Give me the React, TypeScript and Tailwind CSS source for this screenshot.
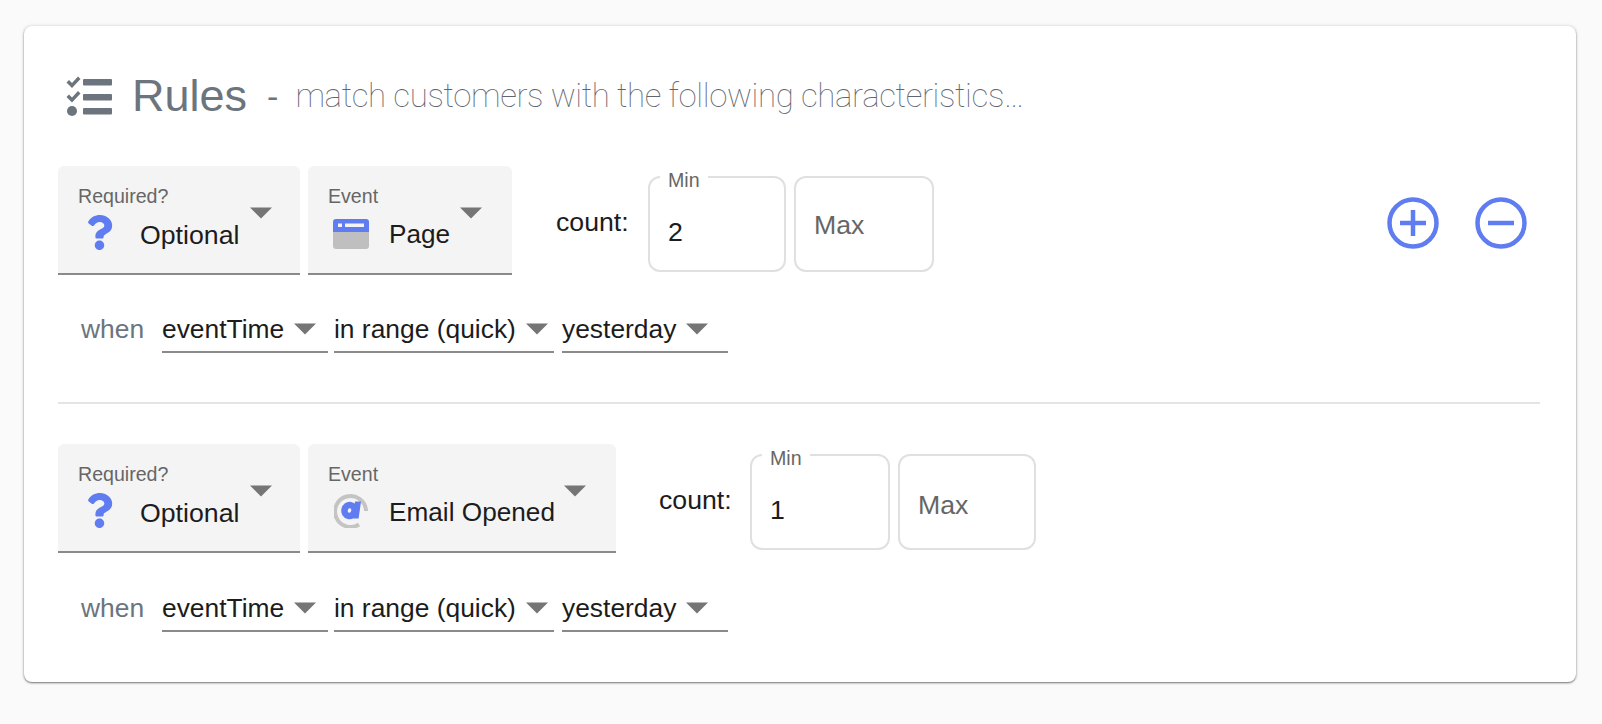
import React from "react";
import { FaQuestion } from "react-icons/fa";

const BLUE = "#5f7cf0";

// Small triangle used by every select
function Caret({ className = "" }: { className?: string }) {
  return (
    <svg width="22" height="12" viewBox="0 0 22 12" className={className}>
      <path d="M0 0.5h22L11 11.5z" fill="#757575" />
    </svg>
  );
}

function ChecklistIcon() {
  return (
    <svg width="46" height="40" viewBox="0 0 46 40" fill="#6c757d">
      <path d="M0.5 6.5l2.5-2.5 3 3L12 0.5l2.5 2.5-8.5 9z" />
      <path d="M0.5 21l2.5-2.5 3 3 6-6.5 2.5 2.5-8.5 9z" />
      <circle cx="6" cy="35" r="5" />
      <rect x="17" y="3" width="29" height="6.5" rx="1" />
      <rect x="17" y="18" width="29" height="6.5" rx="1" />
      <rect x="17" y="32" width="29" height="6.5" rx="1" />
    </svg>
  );
}

function PageIcon() {
  return (
    <svg width="36" height="30" viewBox="0 0 36 30" className="ml-[4px] mt-[3px]">
      <path d="M0 12h36v15a3 3 0 0 1-3 3H3a3 3 0 0 1-3-3z" fill="#bfbfbf" />
      <path
        d="M3 0h30a3 3 0 0 1 3 3v10H0V3a3 3 0 0 1 3-3zM5 4.5v3.5h4V4.5zM12 4.5v3.5h19V4.5z"
        fill={BLUE}
        fillRule="evenodd"
      />
    </svg>
  );
}

function AtIcon() {
  return (
    <svg width="34" height="36" viewBox="0 0 34 36" className="ml-[3px]">
      <path
        d="M25 32.5A15.5 15.5 0 1 1 32 18v1"
        fill="none"
        stroke="#c4c4c4"
        strokeWidth="4"
      />
      <ellipse cx="15.5" cy="18.5" rx="5" ry="5.5" fill="none" stroke={BLUE} strokeWidth="6.5" transform="rotate(12 15.5 18.5)" />
      <path d="M21 9.5h6l-2.4 17h-6z" fill={BLUE} />
    </svg>
  );
}

function CircleButton({ plus }: { plus?: boolean }) {
  return (
    <svg width="52" height="52" viewBox="0 0 52 52" fill="none" stroke={BLUE} strokeWidth="4.5">
      <circle cx="26" cy="26" r="23.5" />
      <path d="M13 26h26" />
      {plus && <path d="M26 13v26" />}
    </svg>
  );
}

function FilledSelect({
  label,
  value,
  icon,
  width,
  caretGap,
  valueClass,
}: {
  label: string;
  value: string;
  icon: React.ReactNode;
  width: string;
  caretGap: string;
  valueClass: string;
}) {
  return (
    <div className={`${width} h-[109px] bg-[#f4f4f4] rounded-t-[6px] border-b-2 border-[#8a8a8a] pl-[20px] pt-[18px] flex justify-between`}>
      <div>
        <div className="text-[19.6px] leading-[24px] text-[#666]">{label}</div>
        <div className="flex items-center mt-[4px] h-[40px]">
          <div className="w-[62px] flex justify-center pr-[20px]">{icon}</div>
          <span className={`pt-[6px] text-[#1c1c1c] ${valueClass}`}>{value}</span>
        </div>
      </div>
      <Caret className={`mt-[23px] ${caretGap}`} />
    </div>
  );
}

function InlineSelect({ value, width }: { value: string; width: string }) {
  return (
    <div className={`${width} h-[46px] border-b-2 border-[#8a8a8a] flex items-start gap-[10px]`}>
      <span className="pt-[2px] text-[26.4px] leading-[40px] text-[#1c1c1c] whitespace-nowrap">{value}</span>
      <Caret className="mt-[16px]" />
    </div>
  );
}

function CountBox({
  min,
  minWidth,
  maxWidth,
  maxPad,
  className,
}: {
  min: string;
  minWidth: string;
  maxWidth: string;
  maxPad: string;
  className: string;
}) {
  return (
    <div className={`flex gap-[8px] ${className}`}>
      <div className={`relative ${minWidth} h-[96px] rounded-[12px] border-2 border-[#e0e0e0] pl-[18px] pt-[32px] text-[26.7px] leading-[44px] text-[#1c1c1c]`}>
        <span className="absolute -top-[10px] left-[10px] bg-white px-[8px] text-[19.6px] leading-[24px] text-[#666]">
          Min
        </span>
        {min}
      </div>
      <div className={`${maxWidth} ${maxPad} h-[96px] rounded-[12px] border-2 border-[#e0e0e0] pl-[18px] text-[26.7px] leading-[44px] text-[#666]`}>
        Max
      </div>
    </div>
  );
}

function RuleRow({
  event,
  icon,
  eventWidth,
  min,
  countClass,
  minWidth,
  maxWidth,
  maxPad,
  whenGap,
  actions,
}: {
  event: string;
  icon: React.ReactNode;
  eventWidth: string;
  min: string;
  countClass: string;
  minWidth: string;
  maxWidth: string;
  maxPad: string;
  whenGap: string;
  actions?: boolean;
}) {
  return (
    <div>
      <div className="flex items-start">
        <FilledSelect
          label="Required?"
          value="Optional"
          icon={<FaQuestion size={35} color={BLUE} className="ml-[1px]" />}
          width="w-[242px]"
          caretGap="mr-[28px]"
          valueClass="text-[26.7px]"
        />
        <div className="w-[8px]" />
        <FilledSelect
          label="Event"
          value={event}
          icon={icon}
          width={eventWidth}
          caretGap="mr-[30px]"
          valueClass="-ml-[1px] text-[26.2px]"
        />
        <span className={`${countClass} mt-[36px] text-[26.7px] leading-[40px] text-[#1c1c1c]`}>count:</span>
        <CountBox min={min} minWidth={minWidth} maxWidth={maxWidth} maxPad={maxPad} className="mt-[10px]" />
        {actions && (
          <div className="ml-auto mr-[13px] mt-[31px] flex gap-[36px]">
            <CircleButton plus />
            <CircleButton />
          </div>
        )}
      </div>
      <div className={`flex items-start ${whenGap}`}>
        <span className="w-[104px] pl-[23px] pt-[2px] text-[26.4px] leading-[40px] text-[#6c757d]">when</span>
        <InlineSelect value="eventTime" width="w-[166px]" />
        <div className="w-[6px]" />
        <InlineSelect value="in range (quick)" width="w-[220px]" />
        <div className="w-[8px]" />
        <InlineSelect value="yesterday" width="w-[166px]" />
      </div>
    </div>
  );
}

export default function App() {
  return (
    <div className="min-h-[724px] bg-[#fafafa] pt-[26px] px-[26px] font-['Liberation_Sans',Arial,sans-serif]">
      <div className="w-[1552px] -ml-[2px] h-[656px] bg-white rounded-[8px] shadow-[0_1px_2px_rgba(0,0,0,0.5),0_0_4px_rgba(0,0,0,0.12)] pl-[34px] pr-[36px]">
        {/* Card title */}
        <div className="flex items-center h-[140px] pl-[8px]">
          <ChecklistIcon />
          <span className="ml-[20px] text-[45px] text-[#6c757d]">Rules</span>
          <span className="ml-[20px] text-[34px] text-[#6c757d]">-</span>
          <span className="ml-[17px] text-[33px] tracking-[-0.37px] font-['Roboto',sans-serif] font-thin text-[#5f6670]">
            match customers with the following characteristics…
          </span>
        </div>

        <RuleRow
          event="Page"
          icon={<PageIcon />}
          eventWidth="w-[204px]"
          min="2"
          countClass="ml-[44px] w-[92px]"
          minWidth="w-[138px]"
          maxWidth="w-[140px]"
          maxPad="pt-[25px]"
          whenGap="mt-[32px]"
          actions
        />

        <div className="h-[2px] bg-[#e4e4e4] mt-[49px] mb-[40px]" />

        <RuleRow
          event="Email Opened"
          icon={<AtIcon />}
          eventWidth="w-[308px]"
          min="1"
          countClass="ml-[43px] w-[91px]"
          minWidth="w-[140px]"
          maxWidth="w-[138px]"
          maxPad="pt-[27px]"
          whenGap="mt-[33px]"
        />
      </div>
    </div>
  );
}
